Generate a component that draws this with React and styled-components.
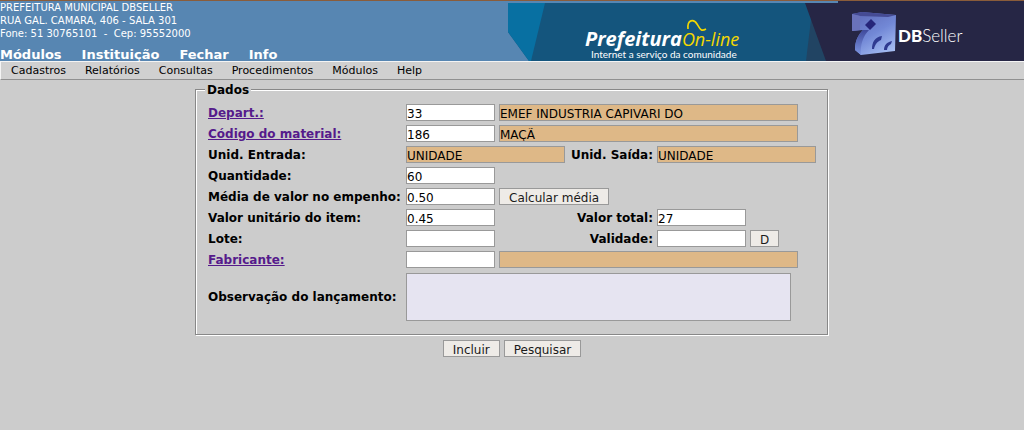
import React from 'react';
import styled, { createGlobalStyle, css } from 'styled-components';

const GlobalStyle = createGlobalStyle`
  *, *::before, *::after { box-sizing: border-box; }
  body {
    margin: 0;
    background: #cccccc;
    color: #000;
    font-family: "DejaVu Sans", sans-serif;
    font-size: 12px;
  }
`;

const Header = styled.header`
  display: flex;
  justify-content: space-between;
  border-top: 1px solid #8a5c3a;
  background: #5786b2;
  color: #fff;
`;

const HeaderInfo = styled.div`
  display: flex;
  flex-direction: column;
  justify-content: space-between;
`;

const Address = styled.address`
  font-style: normal;
  font-size: 10px;
  line-height: 13px;
  white-space: pre;
`;

const MainNav = styled.nav`
  display: flex;
  gap: 20px;
`;

const MainNavButton = styled.button`
  padding: 0;
  border: 0;
  background: none;
  color: inherit;
  font: bold 13px/12px "DejaVu Sans", sans-serif;
`;

const BannerArt = styled.svg`
  display: block;
  flex: none;
  width: 516px;
  height: 60px;
`;

const MenuBar = styled.nav`
  display: flex;
  height: 19px;
  padding-left: 1px;
  border: solid;
  border-width: 1px 0 1px 1px;
  border-color: #f4f4f4 #909090 #909090 #f4f4f4;
  background: #d0d0d0;
`;

const MenuButton = styled.button`
  padding: 0 10px 0 9px;
  border: 0;
  background: none;
  color: #000;
  font: 11px/17px "DejaVu Sans", sans-serif;
`;

const Form = styled.form`
  display: flex;
  flex-direction: column;
  align-items: center;
  gap: 4px;
  padding-top: 2px;
`;

/* Etched frame: a grey line with a white highlight on its lower right side. */
const Panel = styled.fieldset`
  margin: 0 1px 1px 0;
  padding: 8px 11px 13px 12px;
  border: 1px solid #888888;
  box-shadow: 1px 1px 0 #ffffff, inset 1px 1px 0 #ffffff;
`;

const Legend = styled.legend`
  position: relative;
  margin-left: -3px;
  padding: 2px 2px 0;
  background: #cccccc;
  font-weight: bold;
  line-height: 12px;
`;

const Fields = styled.div`
  display: grid;
  grid-template-columns: 194px 159px 84px 159px;
  gap: 4px;
  align-items: center;
`;

const labelText = css`
  padding-top: 2px;
  font-weight: bold;
  line-height: 15px;
  white-space: nowrap;
`;

const Label = styled.label`
  ${labelText}
  text-align: ${({ $end }) => ($end ? 'right' : 'left')};
`;

const LookupLink = styled.a`
  ${labelText}
  justify-self: start;
  color: #551a8b;
`;

const FieldGroup = styled.div`
  display: flex;
  gap: 4px;
  grid-column: span ${({ $span }) => $span || 1};
`;

const control = css`
  border: 1px solid #999999;
  font: 12px/14px "DejaVu Sans", sans-serif;
  color: #000;
`;

const widths = { short: '89px', medium: '159px', long: '299px' };

const TextInput = styled.input`
  ${control}
  width: ${({ $size }) => widths[$size || 'short']};
  height: 17px;
  padding: 2px 0 0;
  border-radius: 0;
  background: ${({ readOnly }) => (readOnly ? '#deb887' : '#ffffff')};
`;

const Notes = styled.textarea`
  ${control}
  display: block;
  width: 385px;
  height: 48px;
  margin-top: 1px;
  padding: 1px;
  background: #e6e4f1;
  resize: none;
`;

const Button = styled.button`
  ${control}
  height: 17px;
  padding: 2px 9px 0;
  background: #eeebe7;
  color: #1a1a1a;
`;

const Actions = styled.div`
  display: flex;
  gap: 4px;
`;

function Banner() {
  return (
    <BannerArt viewBox="0 0 516 60" role="img" aria-label="Prefeitura On-line, DBSeller">
      <defs>
        <linearGradient id="cubeFace" x1="0.2" y1="0" x2="0.8" y2="1">
          <stop offset="0" stopColor="#5f6cba" />
          <stop offset="0.5" stopColor="#7288d6" />
          <stop offset="1" stopColor="#a8c0f4" />
        </linearGradient>
        <linearGradient id="cubeLeg" x1="0" y1="0" x2="0" y2="1">
          <stop offset="0" stopColor="#3f4a9c" />
          <stop offset="1" stopColor="#7e96e2" />
        </linearGradient>
      </defs>
      <path d="M0 2H330V60H21L0 31Z" fill="#14557d" />
      <path d="M0 2H37L23 60H21L0 31Z" fill="#0870a2" />
      <path d="M305 2L298 60H330V2Z" fill="#214463" />
      <path d="M330 0H516V60H318L297 2H330Z" fill="#262645" />
      <text x="77" y="45" fontFamily="Open Sans" fontSize="20" fontWeight="700" fontStyle="italic" fill="#fff">
        Prefeitura
        <tspan fontSize="18" fontWeight="400" fill="#f4d800">On-line</tspan>
      </text>
      <text x="83" y="57" fontFamily="Lato" fontSize="10" fill="#fff">Internet a serviço da comunidade</text>
      <path d="M180 28C179 18 186 18 189 23S193 31 198 28" fill="none" stroke="#f4d800" strokeWidth="1.6" />
      <path d="M344 13L354 11L388 14L387 50L353 54L347 49C347 40 350 34 355 29L344 30Z" fill="url(#cubeFace)" />
      <path d="M344 13L354 11L388 14L380 16L352 15Z" fill="#454b94" />
      <path d="M344 13L352 15V29L344 30Z" fill="#6a72ba" />
      <path d="M355 29H361C355 35 352 44 353 54L347 49C347 40 350 34 355 29Z" fill="url(#cubeLeg)" />
      <path d="M357 24L363 18L368 23L362 29Z" fill="#26267a" />
      <path d="M364 48C364 41 367 36 374 35L373 39C370 40 367 43 366 48Z" fill="#2f3a90" />
      <path d="M376 49C376 44 379 41 384 40L383 43C381 44 379 46 379 49Z" fill="#2f3a90" />
      <text x="390" y="41" fontFamily="Lato" fontSize="17" fill="#fff">
        <tspan fontWeight="900">DB</tspan>
        <tspan fontWeight="300">Seller</tspan>
      </text>
    </BannerArt>
  );
}

const mainItems = ['Módulos', 'Instituição', 'Fechar', 'Info'];
const menuItems = ['Cadastros', 'Relatórios', 'Consultas', 'Procedimentos', 'Módulos', 'Help'];

export default function App() {
  return (
    <>
      <GlobalStyle />
      <Header>
        <HeaderInfo>
          <Address>
            <div>PREFEITURA MUNICIPAL DBSELLER</div>
            <div>RUA GAL. CAMARA, 406 - SALA 301</div>
            <div>{'Fone: 51 30765101  -  Cep: 95552000'}</div>
          </Address>
          <MainNav>
            {mainItems.map((item) => <MainNavButton key={item}>{item}</MainNavButton>)}
          </MainNav>
        </HeaderInfo>
        <Banner />
      </Header>
      <MenuBar>
        {menuItems.map((item) => <MenuButton key={item}>{item}</MenuButton>)}
      </MenuBar>
      <Form onSubmit={(event) => event.preventDefault()}>
        <Panel>
          <Legend>Dados</Legend>
          <Fields>
            <LookupLink href="#depart">Depart.:</LookupLink>
            <FieldGroup $span={3}>
              <TextInput aria-label="Depart." defaultValue="33" />
              <TextInput aria-label="Nome do departamento" $size="long" readOnly value="EMEF INDUSTRIA CAPIVARI DO" />
            </FieldGroup>

            <LookupLink href="#material">Código do material:</LookupLink>
            <FieldGroup $span={3}>
              <TextInput aria-label="Código do material" defaultValue="186" />
              <TextInput aria-label="Nome do material" $size="long" readOnly value="MAÇÃ" />
            </FieldGroup>

            <Label htmlFor="entrada">Unid. Entrada:</Label>
            <TextInput id="entrada" $size="medium" readOnly value="UNIDADE" />
            <Label htmlFor="saida" $end>Unid. Saída:</Label>
            <TextInput id="saida" $size="medium" readOnly value="UNIDADE" />

            <Label htmlFor="quantidade">Quantidade:</Label>
            <FieldGroup $span={3}>
              <TextInput id="quantidade" defaultValue="60" />
            </FieldGroup>

            <Label htmlFor="media">Média de valor no empenho:</Label>
            <FieldGroup $span={3}>
              <TextInput id="media" defaultValue="0.50" />
              <Button type="button">Calcular média</Button>
            </FieldGroup>

            <Label htmlFor="unitario">Valor unitário do item:</Label>
            <TextInput id="unitario" defaultValue="0.45" />
            <Label htmlFor="total" $end>Valor total:</Label>
            <TextInput id="total" defaultValue="27" />

            <Label htmlFor="lote">Lote:</Label>
            <TextInput id="lote" />
            <Label htmlFor="validade" $end>Validade:</Label>
            <FieldGroup>
              <TextInput id="validade" />
              <Button type="button">D</Button>
            </FieldGroup>

            <LookupLink href="#fabricante">Fabricante:</LookupLink>
            <FieldGroup $span={3}>
              <TextInput aria-label="Fabricante" />
              <TextInput aria-label="Nome do fabricante" $size="long" readOnly value="" />
            </FieldGroup>

            <Label htmlFor="observacao">Observação do lançamento:</Label>
            <FieldGroup $span={3}>
              <Notes id="observacao" />
            </FieldGroup>
          </Fields>
        </Panel>
        <Actions>
          <Button type="submit">Incluir</Button>
          <Button type="button">Pesquisar</Button>
        </Actions>
      </Form>
    </>
  );
}
